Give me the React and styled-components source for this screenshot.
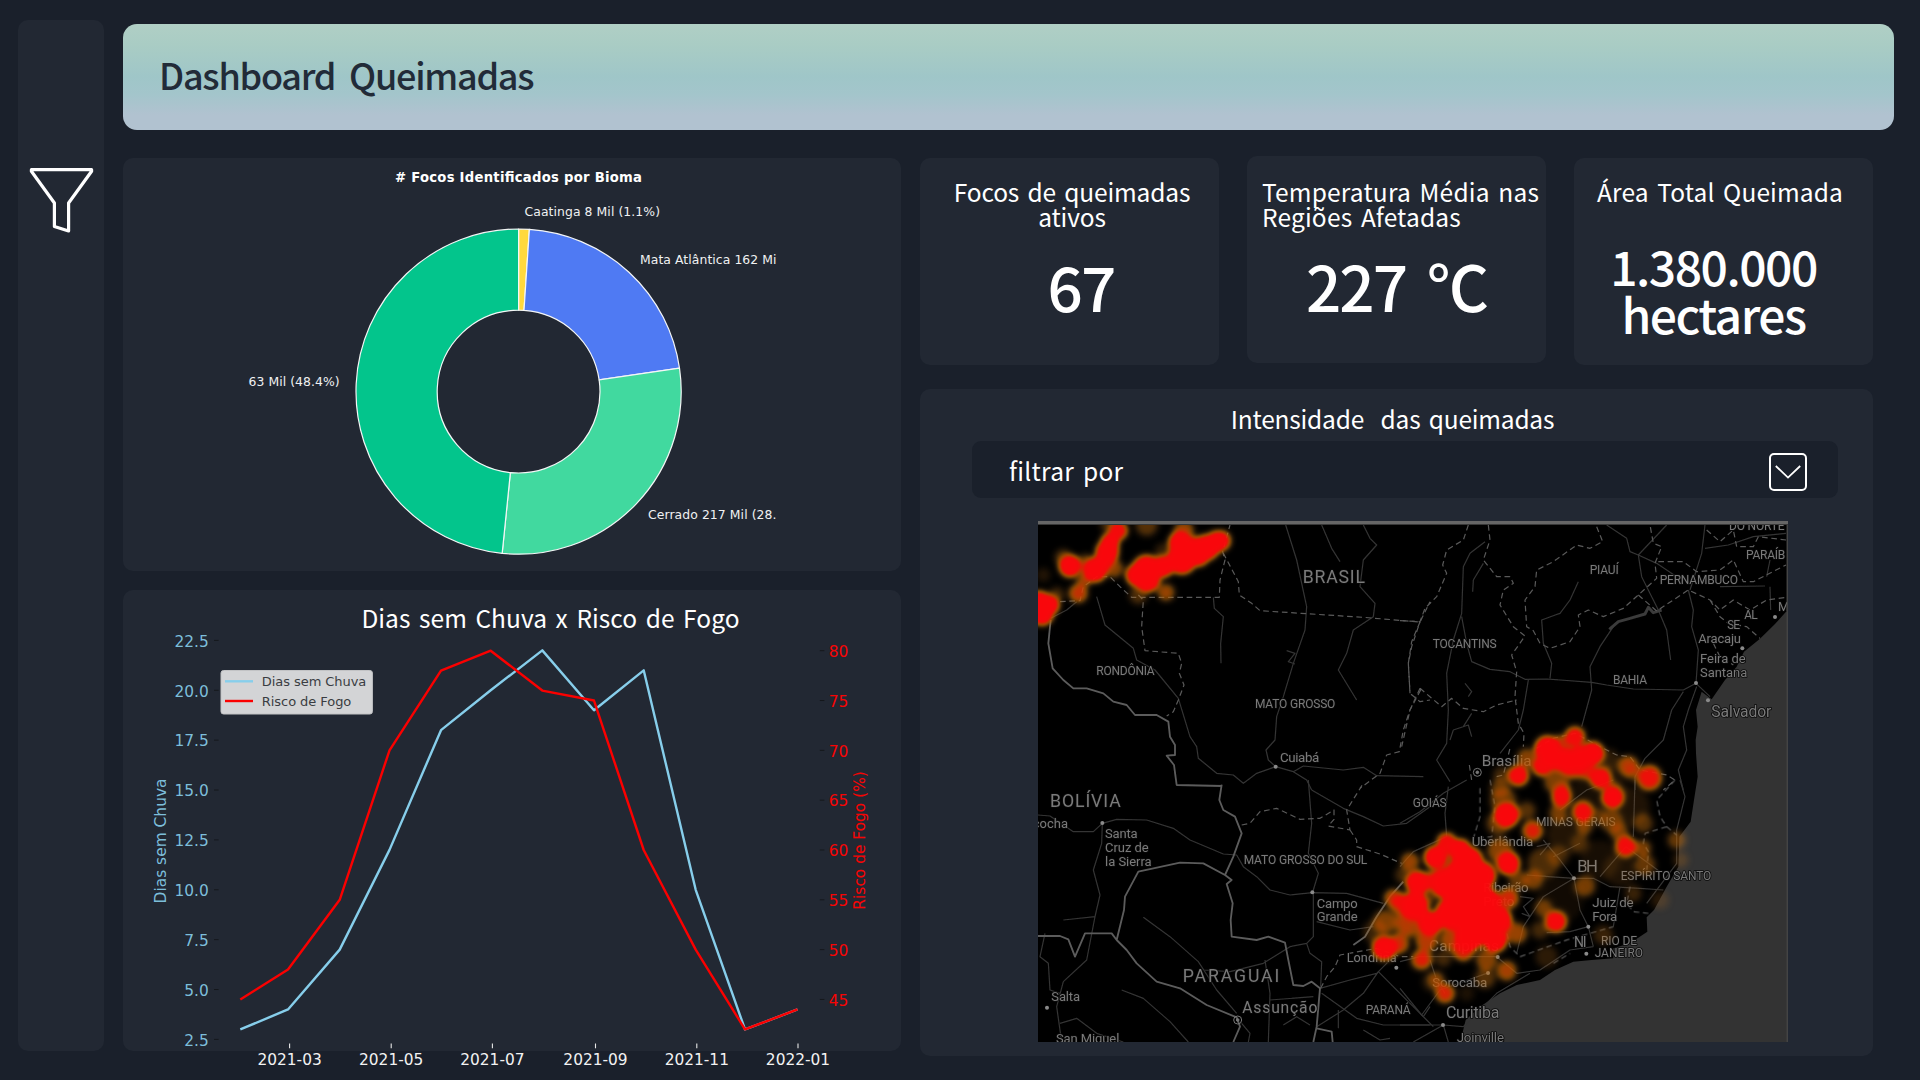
import React from "react";
import styled, { createGlobalStyle } from "styled-components";

const GlobalStyle = createGlobalStyle`
  * { box-sizing: border-box; }
  body { margin: 0; background: #1a202b; overflow: hidden; }
`;

const Page = styled.div`
  width: 1920px;
  height: 1080px;
  padding: 20px 26px 0 18px;
  display: flex;
  gap: 19px;
  background: #1a202b;
  color: #fff;
  font-family: "Noto Sans CJK JP", "Noto Sans", sans-serif;
`;

const Sidebar = styled.aside`
  width: 86px;
  height: 1031px;
  border-radius: 10px;
  background: #222833;
  display: flex;
  flex-direction: column;
  align-items: center;
  padding-top: 146px;
`;

const FilterButton = styled.button`
  width: 68px;
  height: 68px;
  padding: 0;
  border: 0;
  background: none;
`;

const Main = styled.main`
  flex: 1;
  padding-top: 4px;
  display: flex;
  flex-direction: column;
  gap: 28px;
`;

const Header = styled.header`
  height: 106px;
  flex: none;
  border-radius: 14px;
  padding-left: 36px;
  display: flex;
  align-items: center;
  background: linear-gradient(180deg, #b0cfc5 0%, #a9ccc4 20%, #9fc6c8 50%, #a3c5cb 66%, #b1c2d0 86%, #b1c2d0 100%);
`;

const PageTitle = styled.h1`
  margin: 0 0 7px;
  color: #222b38;
  font-size: 36px;
  font-weight: 500;
  line-height: 50px;
  letter-spacing: -1.25px;
  word-spacing: 7px;
  white-space: nowrap;
`;

const Columns = styled.div`
  display: flex;
  gap: 19px;
`;

const Column = styled.div`
  width: ${(p) => p.$width}px;
  display: flex;
  flex-direction: column;
  gap: ${(p) => p.$gap}px;
`;

const Panel = styled.section`
  height: ${(p) => p.$height}px;
  border-radius: 10px;
  background: #222833;
  display: flex;
  flex-direction: column;
  align-items: center;
`;

const PanelTitle = styled.h2`
  margin: 0;
  padding: ${(p) => p.$pad};
  font-size: 24.5px;
  font-weight: 400;
  line-height: 30px;
  letter-spacing: ${(p) => p.$track || 0}px;
  word-spacing: 3px;
  white-space: pre;
`;

const Drawing = styled.svg`
  display: block;
  flex: none;
  overflow: ${(p) => (p.$bleed ? "visible" : "hidden")};
  font-family: ${(p) => p.$font || '"DejaVu Sans", sans-serif'};
`;

const KpiRow = styled.div`
  display: flex;
  gap: 28px;
  align-items: flex-start;
`;

const KpiCard = styled.section`
  width: 299px;
  height: 207px;
  margin-top: ${(p) => (p.$raised ? -2 : 0)}px;
  padding-top: ${(p) => (p.$raised ? 23 : 21)}px;
  border-radius: 10px;
  background: #222833;
  display: flex;
  flex-direction: column;
  align-items: center;
`;

const KpiLabel = styled.div`
  height: 50px;
  align-self: stretch;
  padding-left: ${(p) => p.$inset || 0}px;
  padding-right: ${(p) => p.$insetEnd || 0}px;
  text-align: ${(p) => p.$align || "center"};
  font-size: 24.5px;
  line-height: 25px;
  letter-spacing: ${(p) => p.$track || 0}px;
  word-spacing: 3px;
  white-space: pre;
`;

const KpiValue = styled.div`
  margin-top: ${(p) => (p.$small ? 12 : 24)}px;
  padding-left: ${(p) => p.$shift || 0}px;
  padding-right: ${(p) => p.$shiftEnd || 0}px;
  font-size: ${(p) => (p.$small ? 48 : 62)}px;
  line-height: ${(p) => (p.$small ? 48 : 64)}px;
  letter-spacing: ${(p) => p.$track}px;
  word-spacing: 9px;
  font-weight: 500;
  text-align: center;
  white-space: pre;
`;

const SelectBar = styled.div`
  width: 866px;
  height: 57px;
  margin: 7px 0 23px 52px;
  align-self: flex-start;
  padding: 0 31px 0 37px;
  border-radius: 9px;
  background: #1a202b;
  display: flex;
  align-items: center;
  justify-content: space-between;
  font-size: 24.5px;
  word-spacing: 3px;
  letter-spacing: 0.3px;
`;

const SelectValue = styled.span`
  margin-top: 2px;
`;

const SelectToggle = styled.button`
  width: 38px;
  height: 38px;
  margin-top: 5px;
  padding: 0;
  border: 2px solid #fff;
  border-radius: 5px;
  background: none;
  display: flex;
  align-items: center;
  justify-content: center;
`;

const MapFrame = styled.div`
  width: 750px;
  height: 521px;
  align-self: flex-start;
  margin-left: 118px;
`;

/* ---------- donut ---------- */

const CX = 518.6;
const CY = 391.6;
const R_OUT = 162.6;
const R_IN = 81.4;

const slices = [
  { from: 0, to: 3.8, color: "#ffd93d" },
  { from: 3.8, to: 81.7, color: "#4f7af3" },
  { from: 81.7, to: 185.8, color: "#41d99f" },
  { from: 185.8, to: 360, color: "#03c58c" },
];

const polar = (r, deg) => {
  const a = (deg * Math.PI) / 180;
  return `${CX + r * Math.sin(a)} ${CY - r * Math.cos(a)}`;
};

const slicePath = ({ from, to }) => {
  const big = to - from > 180 ? 1 : 0;
  return `M${polar(R_OUT, from)} A${R_OUT} ${R_OUT} 0 ${big} 1 ${polar(R_OUT, to)} L${polar(R_IN, to)} A${R_IN} ${R_IN} 0 ${big} 0 ${polar(R_IN, from)} Z`;
};

const donutLabels = [
  ["Caatinga 8 Mil (1.1%)", 524.5, 216.2, 135.5],
  ["Mata Atlântica 162 Mi", 640, 264, 136.5],
  ["Cerrado 217 Mil (28.", 648, 519, 128.5],
  ["63 Mil (48.4%)", 248.6, 386, 91],
];

function BiomeChart() {
  return (
    <Drawing width="778" height="413" viewBox="123 158 778 413">
      <text x="395" y="182" fontSize="13.2" fontWeight="700" fill="#fff" textLength="247">
        # Focos Identificados por Bioma
      </text>
      {slices.map((s) => (
        <path key={s.from} d={slicePath(s)} fill={s.color} stroke="#f4f6f6" strokeWidth="1.2" strokeLinejoin="round" />
      ))}
      {donutLabels.map(([t, x, y, w]) => (
        <text key={t} x={x} y={y} fontSize="12.4" fill="#f0f1f2" textLength={w}>{t}</text>
      ))}
    </Drawing>
  );
}

/* ---------- line chart ---------- */

const monthX = [240.3, 288, 339.7, 389.5, 441, 490.7, 542.3, 594, 643.7, 695.7, 745, 797.5];
const dryDays = [3, 4, 7, 12, 18, 20, 22, 19, 21, 10, 3, 4];
const fireRisk = [45, 48, 55, 70, 78, 80, 76, 75, 60, 50, 42, 44];
const dryY = (v) => 640.4 + (22.5 - v) * 19.95;
const riskY = (v) => 650.7 + (80 - v) * 9.965;
const line = (values, scale) => values.map((v, i) => `${monthX[i]},${scale(v)}`).join(" ");

const dryTicks = [22.5, 20, 17.5, 15, 12.5, 10, 7.5, 5, 2.5];
const riskTicks = [80, 75, 70, 65, 60, 55, 50, 45];
const dateTicks = [
  ["2021-03", 289.6], ["2021-05", 391.2], ["2021-07", 492.4],
  ["2021-09", 595.5], ["2021-11", 696.8], ["2022-01", 798],
];

function RainChart() {
  return (
    <Drawing $bleed width="778" height="415" viewBox="123 636 778 415">
      {dryTicks.map((v) => (
        <g key={v}>
          <path d={`M214 ${dryY(v)}h4.6`} stroke="#15181c" strokeWidth="1" />
          <text x="208.8" y={dryY(v) + 6.3} fontSize="15.4" fill="#87ceeb" fillOpacity=".92" textAnchor="end">{v.toFixed(1)}</text>
        </g>
      ))}
      {riskTicks.map((v) => (
        <g key={v}>
          <path d={`M819.8 ${riskY(v)}h4.6`} stroke="#15181c" strokeWidth="1" />
          <text x="828.8" y={riskY(v) + 6.2} fontSize="15.4" fill="#f80404">{v}</text>
        </g>
      ))}
      {dateTicks.map(([t, x]) => (
        <g key={t}>
          <path d={`M${x} 1043.5v4.8`} stroke="#e8e8e8" strokeWidth="1.1" />
          <text x={x} y="1065" fontSize="15.4" fill="#f2f2f2" textAnchor="middle">{t}</text>
        </g>
      ))}
      <text transform="translate(165.6 841) rotate(-90)" textAnchor="middle" fontSize="15.4" fill="#87ceeb" fillOpacity=".92" textLength="125">Dias sem Chuva</text>
      <text transform="translate(865.3 840.4) rotate(-90)" textAnchor="middle" fontSize="15.4" fill="#f80404" textLength="138.5">Risco de Fogo (%)</text>
      <polyline points={line(dryDays, dryY)} fill="none" stroke="#87ceeb" strokeWidth="2.4" strokeLinejoin="round" />
      <polyline points={line(fireRisk, riskY)} fill="none" stroke="#fb0000" strokeWidth="2.4" strokeLinejoin="round" />
      <rect x="221" y="670.5" width="151.4" height="43.5" rx="2.5" fill="#d3d4d6" stroke="#c2c3c5" />
      <path d="M225 681.3h28" stroke="#87ceeb" strokeWidth="2.4" />
      <path d="M225 701h28" stroke="#fb0000" strokeWidth="2.4" />
      <text x="261.8" y="686" fontSize="13" fill="#3a3d42" textLength="104.5">Dias sem Chuva</text>
      <text x="261.8" y="705.5" fontSize="13" fill="#3a3d42" textLength="89.5">Risco de Fogo</text>
    </Drawing>
  );
}

/* ---------- map ---------- */

const NW = "translate(1030 510) scale(.33333)";
const NE = "translate(1400 510) scale(.33333)";
const SW = "translate(1030 780) scale(.33333)";
const SE = "translate(1400 780) scale(.33333)";

const water =
  "M1164 298L1158 305L1125 342L1080 386L1032 425L1010 470L975 510L935 568L905 545L888 600L893 650L887 690L888 730L893 800L882 870L872 935L838 980L835 1070L800 1130L762 1200L740 1222L742 1265L690 1300L640 1315L640 1345L575 1350L520 1355L465 1380L420 1410L350 1425L300 1450L240 1490L197 1530L180 1600L1164 1600Z";

const roads = [
  [NW, "M200 260L225 345L310 415L320 450L375 480L445 565L480 680L500 710L505 745L560 790L610 795L640 820L680 790L737 770L790 785L820 768L940 780L1000 772L1040 797L1180 800M767 45L800 150L830 290L825 360L790 460L760 560L740 620L735 690L708 720L715 750L737 770M790 785L830 810L845 840M1000 45L1020 85L1040 105L1000 150L990 230L1035 280L1030 320L970 360L950 430L925 480L980 570M875 45L905 115L930 155M550 262L553 295L580 320L572 400L573 460M62 325L110 300L140 275M770 422L795 430L775 455L795 462"],
  [NE, "M255 95L210 130L190 170L185 310L160 390L140 490L145 600L140 700L110 750L150 815M185 320L200 400L215 455L270 478L330 485L375 508L440 507L575 517L620 525L700 537L850 540L888 520M385 510L370 600L355 660L300 730M620 45L680 85L690 125L715 135L725 200L775 300L800 360L812 450M715 135L800 45M715 135L770 160L830 200M640 350L600 410L570 470L575 540L545 650M535 215L510 270L480 310L425 330L430 400L455 460L450 505M865 240L880 300L875 350L895 420L888 520L930 560M850 545L815 600L790 690L735 745L705 800L705 840M890 530L865 600L850 650L860 720L835 780L850 840M915 45L905 130L870 240M250 160L220 210L218 245M195 520L215 545L205 560M150 690L160 660L205 645L215 680M215 610L190 650M960 230L1095 228M915 115L985 105L1060 80L1158 70M1100 200L1110 150M1110 230L1112 300"],
  [SW, "M24 105L60 108L130 155L190 155L217 130L260 118L350 120L430 145L480 180L580 222L620 225L640 260L680 290L720 330L780 345L847 338L950 340L1060 370M217 130L215 190L190 270L210 345L195 410L170 540L100 605L80 680L95 786M100 420L195 410M835 0L845 130L835 220L865 280L850 330L850 470L830 490L780 500L700 550L600 575L520 570M340 412L420 470L505 545L560 630L620 700M845 30L940 85L1000 110L1060 138L1130 130L1200 80M860 425L960 450L1030 440M275 630L340 655L420 725L475 786M705 540L720 640L715 786M45 460L30 530L55 550L60 630L90 640M870 625L960 600L1040 580L1100 520M860 740L940 690L1000 640L1045 575L1110 640L1180 710M875 640L980 715L1060 735L1200 735M720 660L850 650M90 730L140 715L200 760L280 786M830 490L840 520L875 545L872 620M1180 710L1200 680M925 690L925 745M760 735L800 710L840 735M1000 750L1050 780L1080 775M635 730L660 760L655 786"],
  [SE, "M0 130L60 95L130 40L200 0M145 20L135 100L140 170L40 215L0 260M430 180L480 240L522 295L540 390L565 440L580 500M380 285L522 295L430 350L370 440L350 520M522 295L580 295L630 320L720 325L790 330M600 290L678 200L780 275M540 190L460 230M705 0L700 170M660 320L640 440M840 0L855 50L830 150L830 250L740 370M440 458L510 455L565 440M290 530L350 580L420 570L510 510L580 500M0 545L60 530L290 530M90 540L110 600L135 640M130 735L190 740L290 640L390 580M0 735L130 735L40 786M65 705L120 630L260 580M130 735L145 786M0 625L65 705L100 740M360 350L400 355L370 380L390 410L365 400M410 200L450 190L420 225M480 90L560 30L640 0"],
];

const states = [
  [NW, "M90 275L150 272L160 230L200 200L240 200L270 230L305 262L345 262L568 262L570 210L585 150L578 125L600 45M580 130L625 215L628 255L665 280L690 302L1000 322L1170 336L1200 275M1170 336L1145 395L1135 460L1140 550L1170 575L1200 570M325 255L340 270L335 350L345 422L445 430L455 460L448 490L462 525L445 570L430 605L410 618M1172 540L1140 600L1120 660L1108 725L1070 735L1050 790L990 835"],
  [NE, "M205 45L190 90L140 120L128 165L140 190L110 260L75 295L60 335L35 410L25 460L30 550M0 332L60 335M265 45L270 90L250 150L290 200L330 200L340 220L310 240L300 285L340 350L375 378L335 435L350 485L345 560L355 640L372 670L370 710M590 50L608 95L570 115L530 105L460 155L410 180L405 230L375 270L380 350L400 362L420 400L450 415L510 395L540 350L535 315L565 300L610 320L670 295L715 255L770 205L765 160L785 110L760 100L750 45M715 255L770 303L865 240L930 270L960 300L1000 270L1050 300L1100 270L1158 262M775 155L850 155L890 185L960 180L1000 150L1030 215L1060 215L1158 165M920 60L960 95L1000 60L1010 110L1060 110L1075 80L1158 90M60 535L125 590L155 565L190 595L250 605L290 585L350 570M60 535L30 600L5 710M930 270L960 320L985 340L1040 350L1080 385M410 715L460 685L525 670L600 710L650 735L690 740L720 780L800 795L825 810L790 840M940 400L960 440L1000 465M208 765L215 810M290 800L310 795L330 715"],
  [SW, "M635 135L660 130L690 95L740 85L810 118L870 115L912 90L912 118L895 138L960 150L950 90L1000 10M960 150L980 180L980 200L1050 222L1115 250M872 625L890 590L915 560L930 525L1040 505L1110 530L1150 530"],
  [SE, "M360 530L430 505L500 480L640 440M320 460L330 500L360 530M825 0L770 60L780 110L800 140L830 165M800 140L735 160L730 190L745 215L740 270M690 320L680 370L700 395L745 400M270 0L285 80L275 170L220 175L240 110L240 20M460 550L510 520"],
];

const countries = [
  [NW, "M62 330L55 400L68 475L100 510L130 535L170 535L220 550L250 575L290 585L315 615L380 615L415 635L420 680L435 705L435 735L410 737L432 765L440 825L575 828"],
  [SW, "M575 14L568 60L580 90L615 110L635 160L610 230L585 285L605 300L590 312L608 370L602 420L605 470L680 480L715 470L765 488L775 540L790 615L820 618L845 605L870 625L860 740L850 786M585 285L520 250L450 248L325 275L285 350L282 390L260 480L245 460L165 460L135 530L115 478L90 468L24 468M260 480L290 510L320 550L380 605L450 625L530 675L620 712L630 740L610 786M860 745L905 755L908 786"],
  [SW, "M1120 305L1080 350L1040 410L1005 470L970 495"],
];

const places = [
  [NW, [["BRASIL", 818, 218, 53, 187], ["RONDÔNIA", 199, 496, 36, 175], ["MATO GROSSO", 675, 593, 36, 241], ["Cuiabá", 750, 755, 40, 118]]],
  [NE, [["TOCANTINS", 98, 413, 36, 192], ["PIAUÍ", 569, 192, 36, 87], ["PERNAMBUCO", 779, 223, 36, 235], ["PARAÍB", 1038, 147, 36, 118], ["DO NORTE", 987, 60, 36, 167], ["M", 1134, 302, 38], ["AL", 1033, 327, 36, 40], ["SE", 982, 357, 36, 38], ["Aracaju", 895, 398, 39, 128], ["Feira de", 900, 459, 39, 137], ["Santana", 900, 502, 39, 142], ["BAHIA", 639, 522, 36, 102], ["Salvador", 934, 622, 47, 180], ["Brasília", 245, 767, 46, 150]]],
  [SW, [["BOLÍVIA", 60, 80, 53, 212], ["cocha", 8, 143, 39, 106], ["Santa", 225, 174, 39, 98], ["Cruz de", 225, 216, 39, 131], ["la Sierra", 225, 258, 39, 140], ["MATO GROSSO DO SUL", 641, 252, 36, 371], ["Campo", 860, 383, 39, 123], ["Grande", 860, 424, 39, 123], ["Londrina", 950, 545, 38, 150], ["PARAGUAI", 458, 605, 53, 290], ["Assunção", 637, 699, 47, 225], ["PARANÁ", 1007, 702, 36, 135], ["Salta", 64, 663, 39, 86], ["San Miguel", 78, 788, 39, 190]]],
  [SE, [["GOIÁS", 38, 81, 36, 102], ["MINAS GERAIS", 408, 138, 36, 239], ["Uberlândia", 215, 197, 40, 185], ["BH", 532, 275, 50, 62], ["ESPÍRITO SANTO", 662, 300, 36, 272], ["Ribeirão", 250, 335, 40, 136], ["Preto", 250, 378, 40, 93], ["Juiz de", 577, 382, 40, 124], ["Fora", 577, 424, 40, 75], ["NI", 522, 500, 42, 38], ["RIO DE", 603, 495, 36, 108], ["JANEIRO", 584, 531, 36, 145], ["Campinas", 87, 514, 46, 210], ["Sorocaba", 97, 620, 40, 165], ["Curitiba", 138, 714, 48, 160], ["Joinville", 170, 786, 40, 142]]],
];

const towns = [
  [NW, [[737, 770]]],
  [NE, [[1125, 321], [1027, 415], [888, 519], [924, 571]]],
  [SW, [[217, 129], [847, 337], [1099, 563], [51, 683]]],
  [SE, [[522, 295], [565, 440], [559, 521], [293, 531], [264, 579], [129, 735]]],
];

/* fire readings: x, y, radius, intensity */
const fires = [
  [NW, [
    [265, 62, 28, .88], [240, 98, 28, 1], [232, 125, 34, 1], [222, 150, 28, 1], [195, 180, 36, 1], [120, 168, 33, 1], [100, 143, 26, .3],
    [252, 175, 28, .45], [145, 250, 28, .65], [162, 212, 22, .5], [168, 158, 26, .35], [26, 292, 48, 1], [58, 285, 30, 1], [36, 312, 34, 1],
    [322, 195, 34, 1], [350, 180, 44, 1], [352, 208, 38, 1], [398, 170, 32, 1], [450, 98, 34, 1], [455, 148, 44, 1], [500, 125, 44, 1],
    [530, 112, 38, 1], [560, 96, 32, 1], [572, 92, 30, .9], [462, 62, 30, .5], [408, 247, 26, .5], [350, 45, 34, .3], [235, 42, 26, .25],
    [325, 255, 28, .28], [40, 195, 22, .14], [80, 255, 24, .25], [400, 125, 26, .2],
  ]],
  [NE, [
    [442, 716, 38, 1], [525, 680, 30, .88], [577, 730, 35, 1], [540, 745, 36, 1], [500, 752, 36, 1], [460, 745, 34, 1], [425, 770, 28, .92],
    [480, 708, 32, .6], [520, 775, 30, .75], [560, 780, 28, .7], [602, 805, 32, .92], [355, 797, 31, .92], [685, 768, 31, .6], [700, 790, 26, .25],
    [748, 803, 37, .8], [380, 745, 30, .45], [470, 815, 38, .42], [488, 842, 26, .4], [305, 795, 26, .25], [625, 750, 34, .18], [640, 835, 24, .3], [300, 835, 30, .3],
  ]],
  [SE, [
    [485, 52, 30, .88], [638, 52, 32, 1], [548, 95, 31, .88], [555, 140, 24, .4], [320, 105, 37, 1], [310, 62, 40, .35], [295, 130, 36, .35],
    [398, 152, 30, .75], [380, 92, 28, .3], [475, 100, 28, .4], [540, 190, 30, .2], [595, 110, 26, .25], [635, 125, 34, .35], [658, 158, 28, .4],
    [678, 200, 31, .88], [730, 130, 30, .3], [728, 205, 26, .42], [735, 255, 32, .35], [830, 180, 28, .35], [842, 240, 24, .2], [780, 360, 28, .16],
    [700, 340, 26, .22], [555, 318, 32, .4], [430, 250, 48, .28], [475, 228, 32, .22], [400, 300, 30, .42], [325, 250, 34, 1], [300, 212, 38, .45],
    [325, 355, 31, .7], [355, 300, 30, .35], [430, 385, 28, .35], [468, 425, 32, .92], [350, 460, 32, .5], [420, 450, 28, .25], [320, 572, 30, .55],
    [440, 530, 34, .18], [260, 540, 32, .45], [255, 595, 32, .3], [200, 640, 24, .12], [135, 640, 29, .72], [108, 600, 26, .4], [62, 540, 30, .52],
    [0, 490, 30, .4], [130, 535, 26, .25], [80, 480, 34, .4], [610, 465, 30, .22], [140, 187, 29, .88], [108, 232, 35, 1], [180, 212, 34, 1],
    [208, 242, 40, 1], [53, 308, 35, 1], [100, 300, 28, .75], [140, 310, 46, 1], [190, 285, 55, 1], [245, 287, 42, 1], [200, 350, 66, 1],
    [255, 365, 44, 1], [155, 400, 48, 1], [295, 420, 40, 1], [235, 430, 56, 1], [210, 468, 44, 1], [285, 480, 36, 1], [92, 430, 36, 1],
    [44, 378, 41, 1], [30, 430, 40, .5], [190, 510, 32, .75], [155, 478, 34, .55], [30, 245, 28, .5], [5, 372, 32, .65], [75, 345, 36, .3],
    [600, 30, 80, .1], [690, 80, 60, .13], [600, 240, 60, .1], [500, 165, 60, .14], [660, 270, 50, .13], [480, 360, 70, .08],
  ]],
  [SW, [
    [1090, 355, 28, .6], [1063, 505, 36, .98], [1100, 492, 30, .45], [1065, 425, 36, .42], [1180, 537, 28, .5], [1035, 455, 36, .22], [1120, 430, 36, .2],
    [1190, 485, 30, .35], [1205, 605, 30, .15], [1120, 285, 26, .25],
  ]],
];

function HeatMap() {
  return (
    <Drawing $font="Roboto, sans-serif" width="750" height="521" viewBox="1038 521 750 521">
      <defs>
        <filter id="heat" filterUnits="userSpaceOnUse" x="1038" y="521" width="750" height="521" colorInterpolationFilters="sRGB">
          <feGaussianBlur stdDeviation="3.4" />
          <feColorMatrix values="0 0 0 1 0  0 0 0 1 0  0 0 0 1 0  0 0 0 1 0" />
          <feComponentTransfer>
            <feFuncR type="table" tableValues=".7 .7 .7 .72 .74 .77 .82 .9 1 1 1" />
            <feFuncG type="table" tableValues=".42 .42 .42 .41 .38 .34 .27 .17 .07 .04 .03" />
            <feFuncB type="table" tableValues=".12 .12 .1 .06 .02 .01 .01 .02 .04 .05 .05" />
            <feFuncA type="table" tableValues="0 .13 .28 .46 .63 .77 .86 .91 .93 .96 .98" />
          </feComponentTransfer>
        </filter>
        <filter id="soft" filterUnits="userSpaceOnUse" x="1038" y="521" width="750" height="521">
          <feGaussianBlur stdDeviation=".35" />
        </filter>
      </defs>
      <rect x="1038" y="521" width="750" height="521" fill="#000" />
      <g transform={NE}><path d={water} fill="#333" /></g>
      <g fill="none" strokeLinejoin="round" filter="url(#soft)">
        {roads.map(([t, d]) => <path key={t} transform={t} d={d} stroke="#343434" strokeWidth="3.6" />)}
        <path transform={NE} d="M628 358L655 335L690 325L735 312L745 292L760 308L785 300" stroke="#3a3a3a" strokeWidth="9" />
        {states.map(([t, d]) => <path key={t} transform={t} d={d} stroke="#5a5a5a" strokeWidth="3.6" strokeDasharray="17 11" />)}
        {countries.map(([t, d], i) => <path key={i} transform={t} d={d} stroke="#5c5c5c" strokeWidth="5.5" />)}
      </g>
      {towns.map(([t, list]) => (
        <g key={t} transform={t} fill="#8a8a8a">
          {list.map(([x, y]) => <circle key={x} cx={x} cy={y} r="6" />)}
        </g>
      ))}
      <g fill="#777" stroke="#777" strokeWidth="3">
        <g transform={NE}><circle cx="232" cy="787" r="12" fill="none" /><circle cx="232" cy="787" r="4" /></g>
        <g transform={SW}><circle cx="623" cy="720" r="12" fill="none" /><circle cx="623" cy="720" r="4" /></g>
      </g>
      {places.map(([t, list]) => (
        <g key={t} transform={t} fill="#7a7a7a" stroke="#0a0a0a" strokeWidth="5" strokeLinejoin="round" style={{ paintOrder: "stroke" }}>
          {list.map(([name, x, y, size, w]) => (
            <text key={name} x={x} y={y} fontSize={size} textLength={w}>{name}</text>
          ))}
        </g>
      ))}
      <g filter="url(#heat)" fill="#fff">
        {fires.map(([t, list]) => (
          <g key={t} transform={t}>
            {list.map(([x, y, r, o], i) => <circle key={i} cx={x} cy={y} r={r} fillOpacity={o} />)}
          </g>
        ))}
      </g>
      <path d="M1787.3 521v521" stroke="#444" strokeWidth="1.5" />
      <rect x="1038" y="521" width="750" height="3" fill="#666" />
      <rect x="1038" y="524" width="750" height="1" fill="#383838" />
    </Drawing>
  );
}

export default function App() {
  return (
    <Page>
      <GlobalStyle />
      <Sidebar>
        <FilterButton aria-label="filtro">
          <svg width="68" height="68" viewBox="27 166 68 68" fill="none" stroke="#fff" strokeWidth="3.2" strokeLinejoin="round">
            <path d="M31.4 169.7H91.6V171.2L68.6 203V231L54.4 226.5V203L31.4 171.2Z" />
          </svg>
        </FilterButton>
      </Sidebar>
      <Main>
        <Header>
          <PageTitle>Dashboard Queimadas</PageTitle>
        </Header>
        <Columns>
          <Column $width={778} $gap={19}>
            <Panel $height={413}>
              <BiomeChart />
            </Panel>
            <Panel $height={461}>
              <PanelTitle $pad="13px 0 3px 77px" $track={0.05}>Dias sem Chuva x Risco de Fogo</PanelTitle>
              <RainChart />
            </Panel>
          </Column>
          <Column $width={953} $gap={24}>
            <KpiRow>
              <KpiCard>
                <KpiLabel $inset={5} $track={-0.15}>{"Focos de queimadas\nativos"}</KpiLabel>
                <KpiValue $track={-1.8} $shift={23}>67</KpiValue>
              </KpiCard>
              <KpiCard $raised>
                <KpiLabel $align="left" $inset={15} $track={0.18}>{"Temperatura Média nas\nRegiões Afetadas"}</KpiLabel>
                <KpiValue $track={-2}>227 ℃</KpiValue>
              </KpiCard>
              <KpiCard>
                <KpiLabel $insetEnd={7} $track={0.12}>Área Total Queimada</KpiLabel>
                <KpiValue $small $track={-1.5} $shiftEnd={20}>{"1.380.000\nhectares"}</KpiValue>
              </KpiCard>
            </KpiRow>
            <Panel $height={667}>
              <PanelTitle $pad="15px 8px 0 0" $track={-0.2}>{"Intensidade  das queimadas"}</PanelTitle>
              <SelectBar>
                <SelectValue>filtrar por</SelectValue>
                <SelectToggle aria-label="abrir">
                  <svg width="26" height="14" viewBox="0 0 26 14" fill="none" stroke="#fff" strokeWidth="1.8">
                    <path d="M.8 1L13 12.6L25.2 1" />
                  </svg>
                </SelectToggle>
              </SelectBar>
              <MapFrame>
                <HeatMap />
              </MapFrame>
            </Panel>
          </Column>
        </Columns>
      </Main>
    </Page>
  );
}
